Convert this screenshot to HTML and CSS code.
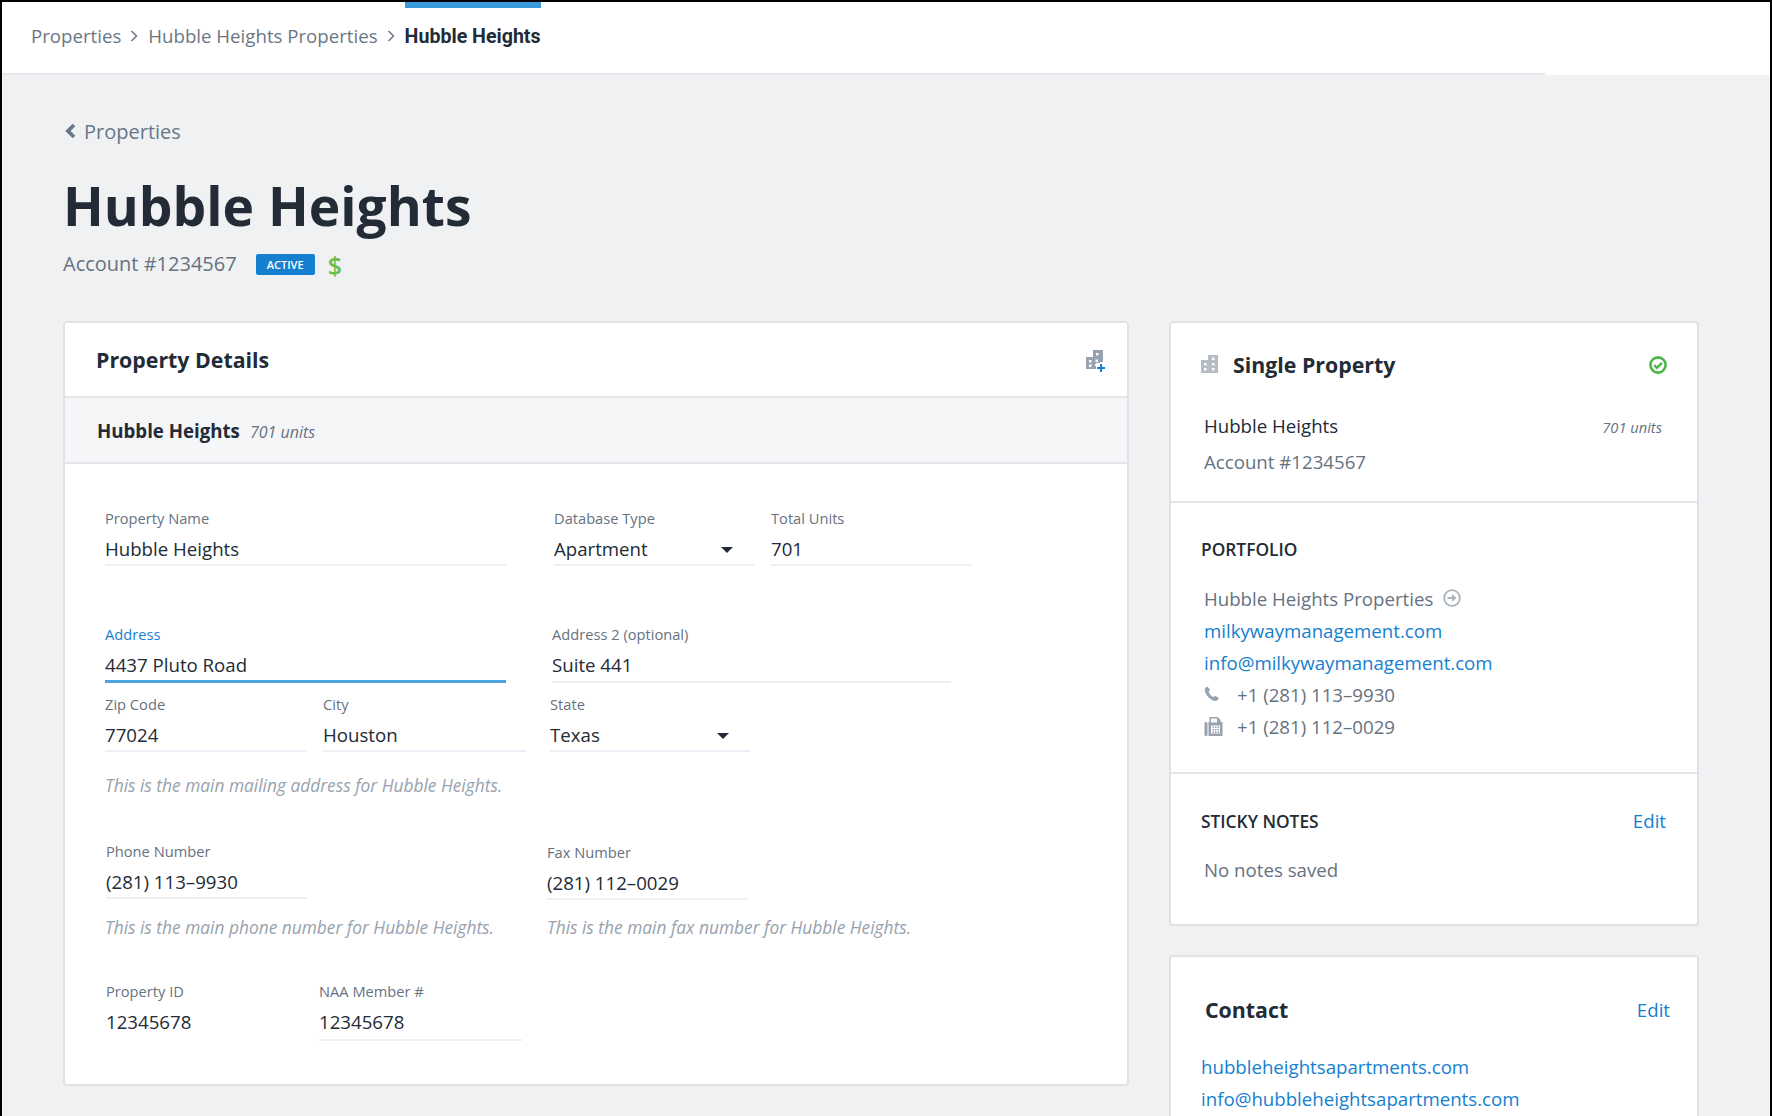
FILE: index.html
```html
<!DOCTYPE html>
<html lang="en">
<head>
    <meta charset="UTF-8">
    <title>Hubble Heights</title>
    <link rel="stylesheet" href="styles.css">
</head>
<body>
<div class="page">
    <div class="topbar">
        <div class="crumbs">
            <span class="crumb">Properties</span>
            <svg class="crumb-sep" viewBox="0 0 8 12"><path d="M1.5 1l5 5-5 5" fill="none" stroke="#6b7785" stroke-width="1.5"/></svg>
            <span class="crumb">Hubble Heights Properties</span>
            <svg class="crumb-sep" viewBox="0 0 8 12"><path d="M1.5 1l5 5-5 5" fill="none" stroke="#6b7785" stroke-width="1.5"/></svg>
            <span class="crumb-active">Hubble Heights</span>
        </div>
        <div class="topbar-line"></div>
    </div>

    <div class="content">
        <div class="back">
            <svg class="back-icon" viewBox="0 0 11 16"><path d="M9 2L3 8l6 6" fill="none" stroke="#66788a" stroke-width="3.800"/></svg>
            <span>Properties</span>
        </div>
        <h1 class="title">Hubble Heights</h1>
        <div class="account">
            <span class="account-num">Account #1234567</span>
            <span class="badge">ACTIVE</span>
            <span class="dollar">$</span>
        </div>

        <div class="columns">
            <div class="card details">
                <div class="details-head">
                    <h2 class="details-title">Property Details</h2>
                    <svg class="icon-add" viewBox="0 0 20 22">
                        <path fill="#98a2ae" d="M7 0h10v12h-3v7H0V7h7z"/>
                        <path fill="#fff" d="M10 3h2.500v2.500H10zM3 10h2.500v2.500H3zM9.500 9.500H12V12H9.500zM3 14.500h2.500V17H3zM9 14h2v2H9z"/>
                        <path fill="#fff" d="M10 13h10v9H10z"/>
                        <path fill="#1580d0" d="M14 14h2v3h3v2h-3v3h-2v-3h-3v-2h3z"/>
                    </svg>
                </div>
                <div class="details-sub">
                    <span class="sub-name">Hubble Heights</span>
                    <span class="units">701 units</span>
                </div>
                <div class="form">
                    <div class="row row-1">
                        <div class="field w-401">
                            <div class="label">Property Name</div>
                            <div class="value">Hubble Heights</div>
                        </div>
                        <div class="field w-200 gap-48 select">
                            <div class="label">Database Type</div>
                            <div class="value">Apartment</div>
                        </div>
                        <div class="field w-201 gap-17">
                            <div class="label">Total Units</div>
                            <div class="value">701</div>
                        </div>
                    </div>
                    <div class="row row-2">
                        <div class="field w-401 focused">
                            <div class="label">Address</div>
                            <div class="value">4437 Pluto Road</div>
                        </div>
                        <div class="field w-399 gap-46">
                            <div class="label">Address 2 (optional)</div>
                            <div class="value">Suite 441</div>
                        </div>
                    </div>
                    <div class="row row-3">
                        <div class="field w-202">
                            <div class="label">Zip Code</div>
                            <div class="value">77024</div>
                        </div>
                        <div class="field w-203 gap-16">
                            <div class="label">City</div>
                            <div class="value">Houston</div>
                        </div>
                        <div class="field w-200 gap-24 select">
                            <div class="label">State</div>
                            <div class="value">Texas</div>
                        </div>
                    </div>
                    <p class="hint hint-address">This is the main mailing address for Hubble Heights.</p>
                    <div class="row row-4">
                        <div class="col-phone">
                            <div class="field w-201">
                                <div class="label">Phone Number</div>
                                <div class="value">(281) 113&#8211;9930</div>
                            </div>
                            <p class="hint">This is the main phone number for Hubble Heights.</p>
                        </div>
                        <div class="col-fax">
                            <div class="field w-201">
                                <div class="label">Fax Number</div>
                                <div class="value">(281) 112&#8211;0029</div>
                            </div>
                            <p class="hint">This is the main fax number for Hubble Heights.</p>
                        </div>
                    </div>
                    <div class="row row-5">
                        <div class="field w-201 plain">
                            <div class="label">Property ID</div>
                            <div class="value">12345678</div>
                        </div>
                        <div class="field w-203 gap-12">
                            <div class="label">NAA Member #</div>
                            <div class="value">12345678</div>
                        </div>
                    </div>
                </div>
            </div>

            <div class="side">
                <div class="card side-card">
                    <div class="section section-top">
                        <div class="single-head">
                            <svg class="icon-building" viewBox="0 0 17 18">
                                <path fill="#b4bcc5" d="M7 0h10v18H0V5h7z"/>
                                <path fill="#fff" d="M11 2.500h2.500V5H11zM3 8h2.500v2.500H3zM11 8h2.500v2.500H11zM3 13h2.500v2.500H3zM11 13h2.500v2.500H11z"/>
                            </svg>
                            <h2 class="single-title">Single Property</h2>
                            <svg class="icon-check" viewBox="0 0 18 18">
                                <circle cx="9" cy="9" r="7.600" fill="none" stroke="#4cb648" stroke-width="2.600"/>
                                <path d="M5.200 9.200l2.700 2.600 5-5" fill="none" stroke="#4cb648" stroke-width="2.500"/>
                            </svg>
                        </div>
                        <div class="single-row">
                            <span class="single-name">Hubble Heights</span>
                            <span class="units">701 units</span>
                        </div>
                        <div class="single-acct">Account #1234567</div>
                    </div>
                    <div class="section section-portfolio">
                        <h3 class="caps">PORTFOLIO</h3>
                        <div class="info">
                            <div class="info-line muted">Hubble Heights Properties
                                <svg class="icon-go" viewBox="0 0 18 18">
                                    <circle cx="9" cy="9" r="7.800" fill="none" stroke="#aab3bd" stroke-width="1.800"/>
                                    <path d="M4.500 8h4.500V5l4.500 4-4.500 4v-3H4.500z" fill="#aab3bd"/>
                                </svg>
                            </div>
                            <a class="info-line link">milkywaymanagement.com</a>
                            <a class="info-line link">info@milkywaymanagement.com</a>
                            <div class="info-line muted">
                                <svg class="icon-phone" viewBox="0 0 16 16"><path fill="#98a2ae" d="M3.700.7l2.300 3-1.400 2c.4 1.900 2.600 4.600 4.900 5.300l1.900-1.300 3.300 2.400c-.3 1.600-1.500 2.900-3.100 2.900C6.500 15 .7 8.200.8 3.500.8 2 2.100.8 3.700.7z"/></svg>
                                <span>+1 (281) 113&#8211;9930</span>
                            </div>
                            <div class="info-line muted">
                                <svg class="icon-fax" viewBox="0 0 18 19">
                                    <path fill="#98a2ae" d="M0 6.500C0 5.500.7 5 1.500 5S3 5.500 3 6.500v11C3 18.500 2.300 19 1.500 19S0 18.500 0 17.500zM4 5h1V0h8l3 3v2h2v14H4z"/>
                                    <path fill="#fff" d="M6.500 1.500h6v4h-6zM6.500 8.500h9v8h-9z"/>
                                    <path fill="#98a2ae" d="M8 9.500h1.500V11H8zM10.500 9.500H12V11h-1.500zM13 9.500h1.500V11H13zM8 12h1.500v1.500H8zM10.500 12H12v1.500h-1.500zM13 12h1.500v1.500H13zM8 14.500h1.500V16H8zM10.500 14.500H12V16h-1.500zM13 14.500h1.500V16H13z"/>
                                </svg>
                                <span>+1 (281) 112&#8211;0029</span>
                            </div>
                        </div>
                    </div>
                    <div class="section section-notes">
                        <div class="notes-head">
                            <h3 class="caps">STICKY NOTES</h3>
                            <a class="link edit">Edit</a>
                        </div>
                        <div class="notes-empty">No notes saved</div>
                    </div>
                </div>

                <div class="card side-card contact">
                    <div class="contact-head">
                        <h2 class="contact-title">Contact</h2>
                        <a class="link edit">Edit</a>
                    </div>
                    <a class="info-line link">hubbleheightsapartments.com</a>
                    <a class="info-line link">info@hubbleheightsapartments.com</a>
                </div>
            </div>
        </div>
    </div>
</div>
</body>
</html>
```

FILE: styles.css
```css
* {
    padding: 0;
    margin: 0;
    box-sizing: border-box;
}

html, body {
    height: 100%;
    overflow: hidden;
}

body {
    background: #f0f1f3;
    font-family: "Open Sans", "Noto Sans", sans-serif;
    color: #222b36;
}

.page {
    height: 1116px;
    overflow: hidden;
    border: 2px solid #000;
    border-bottom: 0;
    background: #f0f1f3;
}

/* top bar */
.topbar {
    background: #fff;
}

.crumbs {
    display: flex;
    align-items: center;
    height: 71px;
    padding-left: 29px;
    padding-bottom: 4px;
    font-size: 18.670px;
    color: #6b7785;
}

.crumb-sep {
    width: 8px;
    height: 12px;
    margin: 1px 10px 0 9px;
}

.crumb-active {
    align-self: stretch;
    display: flex;
    align-items: center;
    border-top: 6px solid #3b9ad9;
    margin-bottom: -4px;
    padding-bottom: 8px;
    font-family: Roboto, sans-serif;
    font-weight: 700;
    font-size: 19.600px;
    color: #222b36;
}

.topbar-line {
    width: 1543px;
    height: 2px;
    background: #e6e7ea;
}

/* page head */
.content {
    padding: 0 68px 0 61px;
}

.back {
    display: flex;
    align-items: center;
    height: 30px;
    margin-top: 41px;
    margin-left: 2px;
    font-size: 20px;
    color: #66788a;
}

.back-icon {
    width: 11px;
    height: 16px;
    margin-right: 8px;
}

.title {
    margin-top: 25px;
    font-size: 53.330px;
    line-height: 70px;
    font-weight: 700;
    color: #222b36;
}

.account {
    display: flex;
    align-items: center;
    height: 30px;
    margin-top: 7px;
}

.account-num {
    font-size: 20px;
    color: #66727f;
}

.badge {
    width: 59px;
    height: 21px;
    margin-top: 3px;
    margin-left: 19px;
    border-radius: 2px;
    background: #1580d0;
    color: #fff;
    font-size: 11px;
    font-weight: 600;
    line-height: 21px;
    text-align: center;
}

.dollar {
    margin-top: 3px;
    margin-left: 13px;
    font-size: 25px;
    line-height: 30px;
    font-weight: 600;
    color: #6cc04a;
}

.columns {
    display: grid;
    grid-template-columns: 1066px 530px;
    column-gap: 40px;
    align-items: start;
    margin-top: 43px;
}

.card {
    background: #fff;
    border: 2px solid #e0e2e5;
    border-radius: 4px;
}

/* property details */
.details {
    height: 765px;
}

.details-head {
    display: flex;
    align-items: center;
    justify-content: space-between;
    height: 75px;
    padding: 0 21px 0 31px;
    border-bottom: 2px solid #e3e5e8;
}

.details-title {
    font-size: 21.330px;
    font-weight: 700;
    color: #222b36;
}

.icon-add {
    width: 20px;
    height: 22px;
    margin-top: 3px;
}

.details-sub {
    display: flex;
    align-items: baseline;
    height: 66px;
    padding: 20px 0 0 32px;
    background: #f5f6f8;
    border-bottom: 2px solid #e3e5e8;
}

.sub-name {
    font-size: 18.670px;
    font-weight: 700;
    margin-right: 10px;
}

.units {
    font-size: 16px;
    font-style: italic;
    color: #66727f;
}

.form {
    padding: 44px 0 0 40px;
}

.row {
    display: flex;
}

.field {
    position: relative;
    flex: none;
}

.label {
    font-size: 14.670px;
    line-height: 20px;
    color: #66727f;
}

.value {
    margin-top: 6px;
    height: 32px;
    font-size: 18.670px;
    line-height: 29px;
    color: #222b36;
    border-bottom: 2px solid #eeeef6;
}

.plain .value {
    border-bottom: 0;
}

.focused .label {
    color: #1580d0;
}

.focused .value {
    height: 33px;
    line-height: 30px;
    border-bottom: 3px solid #4aa3df;
}

/* caret on select fields */
.select::after {
    content: "";
    position: absolute;
    right: 21px;
    top: 39px;
    border-left: 6px solid transparent;
    border-right: 6px solid transparent;
    border-top: 6px solid #222b36;
}

.w-202 { width: 202px; }
.w-203 { width: 203px; }
.w-200 { width: 200px; }
.w-201 { width: 201px; }
.w-399 { width: 399px; }
.w-401 { width: 401px; }
.gap-12 { margin-left: 12px; }
.gap-16 { margin-left: 16px; }
.gap-17 { margin-left: 17px; }
.gap-24 { margin-left: 24px; }
.gap-46 { margin-left: 46px; }
.gap-48 { margin-left: 48px; }

.row-2 {
    margin-top: 58px;
}

.row-2 .field:last-child .value {
    height: 33px;
    line-height: 30px;
}

.row-3 {
    margin-top: 11px;
}

.hint {
    margin-top: 21px;
    font-size: 17.330px;
    line-height: 24px;
    font-style: italic;
    color: #98a2ae;
}

.row-4 {
    margin-top: 44px;
}

.col-phone {
    width: 442px;
    padding-left: 1px;
}

.col-fax {
    margin-top: 1px;
}

.col-phone .hint {
    margin-top: 16px;
    margin-left: -1px;
}

.col-fax .hint {
    margin-top: 15px;
}

.row-5 {
    margin-top: 42px;
    padding-left: 1px;
}

.row-5 .value {
    height: 34px;
}

/* side column */
.side-card {
    padding: 0;
}

.side {
    display: flex;
    flex-direction: column;
    gap: 29px;
}

.section {
    border-bottom: 2px solid #e3e5e8;
}

.section:last-child {
    border-bottom: 0;
}

.section-top {
    height: 180px;
    padding: 26px 30px 0 33px;
}

.single-head {
    display: flex;
    align-items: center;
    height: 30px;
}

.icon-building {
    width: 17px;
    height: 18px;
    margin-right: 15px;
    margin-left: -3px;
}

.single-title {
    flex: 1;
    font-size: 21.330px;
    font-weight: 700;
}

.icon-check {
    width: 18px;
    height: 18px;
    margin-top: 1px;
}

.single-row {
    display: flex;
    justify-content: space-between;
    align-items: baseline;
    margin-top: 34px;
    padding-right: 5px;
    line-height: 26px;
}

.single-row .units {
    font-size: 14.670px;
}

.single-name {
    font-size: 18.670px;
    color: #222b36;
}

.single-acct {
    margin-top: 9px;
    font-size: 18.670px;
    line-height: 26px;
    color: #66727f;
}

.section-portfolio {
    height: 271px;
    padding: 34px 0 0 30px;
}

.caps {
    font-size: 17.330px;
    font-weight: 600;
    line-height: 24px;
    color: #222b36;
}

.info {
    margin-top: 21px;
    margin-left: 3px;
}

.info-line {
    display: flex;
    align-items: center;
    height: 32px;
    font-size: 18.670px;
}

.muted {
    color: #66727f;
}

.link {
    color: #1580d0;
}

.icon-go {
    width: 18px;
    height: 18px;
    margin-left: 10px;
}

.icon-phone {
    width: 16px;
    height: 16px;
    margin-right: 17px;
}

.icon-fax {
    width: 19px;
    height: 19px;
    margin-right: 14px;
}

.section-notes {
    height: 150px;
    padding: 35px 31px 0 30px;
}

.notes-head {
    display: flex;
    justify-content: space-between;
    align-items: center;
    height: 24px;
}

.edit {
    font-size: 18.670px;
}

.notes-head .edit {
    margin-top: -2px;
}

.notes-empty {
    margin-top: 25px;
    margin-left: 3px;
    font-size: 18.670px;
    line-height: 24px;
    color: #66727f;
}

.contact {
    height: 300px;
    padding: 37px 0 0 30px;
}

.contact-head {
    display: flex;
    justify-content: space-between;
    align-items: center;
    height: 30px;
    padding: 0 27px 0 4px;
    margin-bottom: 26px;
}

.contact-title {
    font-size: 21.330px;
    font-weight: 700;
}
```
